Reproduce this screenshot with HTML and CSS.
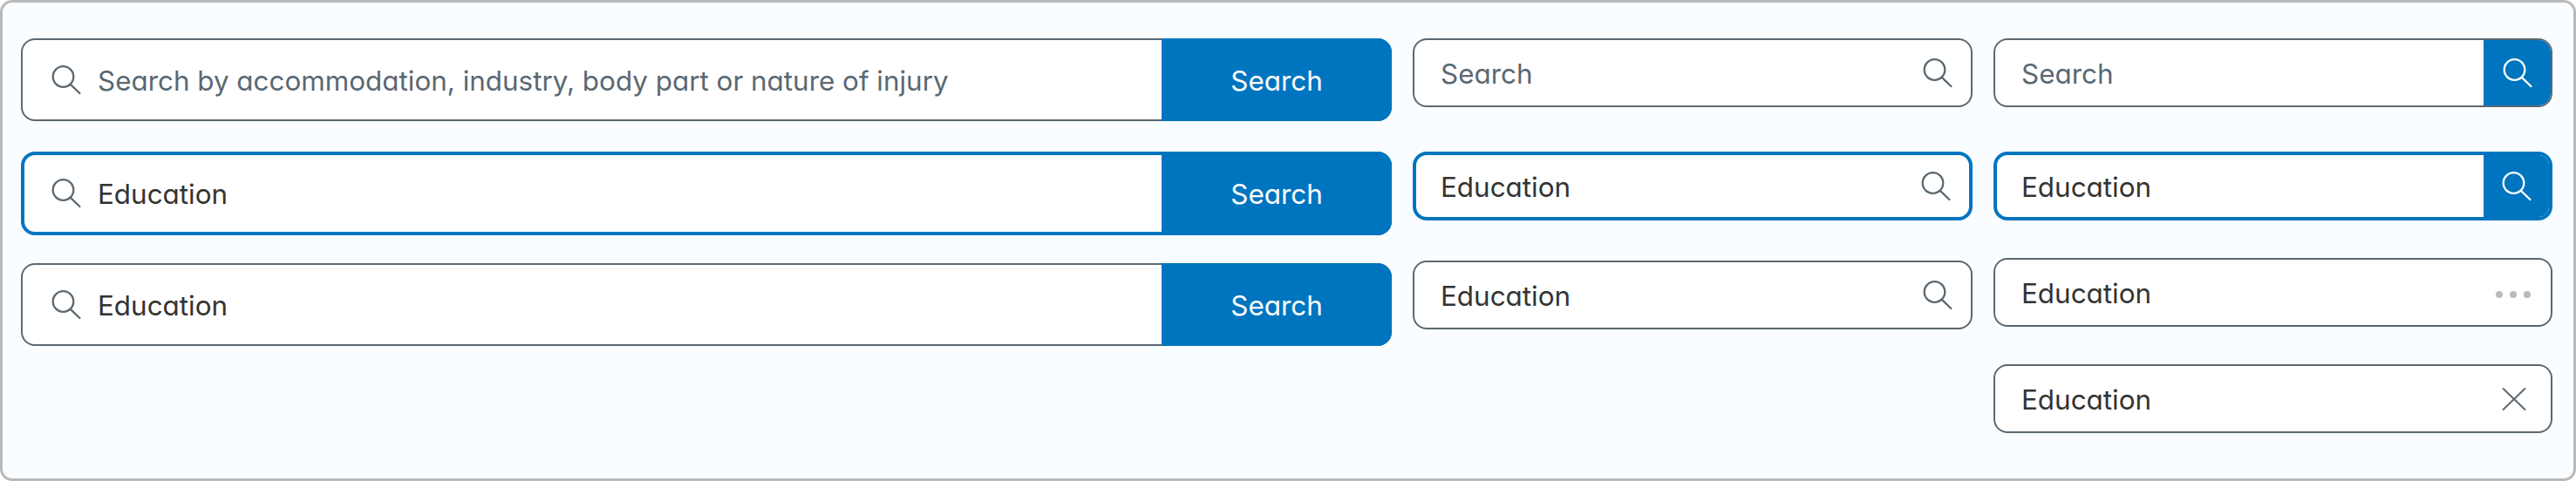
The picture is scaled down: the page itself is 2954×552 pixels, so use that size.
FILE: index.html
```html
<!DOCTYPE html>
<html lang="en">
<head>
<meta charset="utf-8">
<title>Search fields</title>
<link rel="stylesheet" href="styles.css">
</head>
<body>
<svg class="defs" width="0" height="0" aria-hidden="true">
  <symbol id="lens" viewBox="0 0 34 34">
    <circle cx="13.5" cy="13" r="11.8" fill="none" stroke="currentColor" stroke-width="2.3"/>
    <path d="M21.6 21.7 32.4 32" fill="none" stroke="currentColor" stroke-width="2.3" stroke-linecap="round"/>
  </symbol>
</svg>
<main class="panel">
  <section class="col col-wide">
    <div class="field field-lg">
      <svg class="lens lens-lead"><use href="#lens"/></svg>
      <span class="text placeholder">Search by accommodation, industry, body part or nature of injury</span>
      <button class="btn-text">Search</button>
    </div>
    <div class="field field-lg field-focus">
      <svg class="lens lens-lead"><use href="#lens"/></svg>
      <span class="text">Education</span>
      <button class="btn-text">Search</button>
    </div>
    <div class="field field-lg">
      <svg class="lens lens-lead"><use href="#lens"/></svg>
      <span class="text">Education</span>
      <button class="btn-text">Search</button>
    </div>
  </section>
  <section class="col col-mid">
    <div class="field field-sm">
      <span class="text placeholder">Search</span>
      <svg class="lens lens-trail"><use href="#lens"/></svg>
    </div>
    <div class="field field-sm field-focus">
      <span class="text">Education</span>
      <svg class="lens lens-trail"><use href="#lens"/></svg>
    </div>
    <div class="field field-sm">
      <span class="text">Education</span>
      <svg class="lens lens-trail"><use href="#lens"/></svg>
    </div>
  </section>
  <section class="col col-right">
    <div class="field field-sm">
      <span class="text placeholder">Search</span>
      <button class="btn-icon"><svg class="lens"><use href="#lens"/></svg></button>
    </div>
    <div class="field field-sm field-focus">
      <span class="text">Education</span>
      <button class="btn-icon"><svg class="lens"><use href="#lens"/></svg></button>
    </div>
    <div class="field field-sm">
      <span class="text">Education</span>
      <span class="dots"><i></i><i></i><i></i></span>
    </div>
    <div class="field field-sm">
      <span class="text">Education</span>
      <svg class="close" viewBox="0 0 28 26"><path d="M1 0.5 27 25.5M27 0.5 1 25.5" fill="none" stroke="currentColor" stroke-width="2"/></svg>
    </div>
  </section>
</main>
</body>
</html>
```
FILE: styles.css
```css
* { box-sizing: border-box; }
html, body { margin: 0; padding: 0; }
.defs { position: absolute; }
.panel {
  width: 2954px;
  height: 552px;
  padding: 41px 24px 0 21px;
  display: grid;
  grid-template-columns: 1572px 642px 641px;
  column-gap: 24px;
  align-items: start;
  background: #f9fdff;
  border: 3px solid #b9b9b9;
  border-radius: 14px;
  font-family: Inter, "Liberation Sans", sans-serif;
  font-feature-settings: "cv11" 1;
  font-weight: 400;
}
.col { display: flex; flex-direction: column; }
.col-wide { gap: 32px; }
.col-wide .field:nth-child(2) { margin-top: 3px; }
.col-mid { gap: 46px; }
.col-mid .field:nth-child(2) { margin-top: 5px; }
.col-right { gap: 43px; }
.col-right .field:nth-child(2) { margin-top: 8px; }
.field {
  display: flex;
  align-items: center;
  background: #fff;
  border: 2px solid #5a6872;
  border-radius: 16px;
  position: relative;
}
.field-lg { height: 95px; padding-left: 33px; }
.field-sm { height: 79px; padding-left: 30px; overflow: hidden; }
.field-focus { border: 4px solid #0075bf; }
.field-lg.field-focus { height: 96px; padding-left: 31px; }
.field-sm.field-focus { padding-left: 28px; }
.text {
  flex: 1;
  min-width: 0;
  padding-top: 2px;
  font-size: 31.4px;
  line-height: 40px;
  color: #333;
  white-space: nowrap;
}
.placeholder { color: #5a6872; }
.lens { width: 34px; height: 34px; color: #5a6872; display: block; flex: none; }
.lens-lead { margin-right: 19px; }
.lens-trail { margin-right: 21px; }
.btn-text {
  align-self: stretch;
  width: 264px;
  margin: -2px -2px -2px 0;
  border: 0;
  padding: 2px 0 0;
  border-radius: 0 16px 16px 0;
  background: #0075bf;
  color: #fff;
  font: inherit;
  font-feature-settings: inherit;
  font-size: 31.4px;
}
.field-focus .btn-text { margin: -4px -4px -4px 0; }
.btn-icon {
  align-self: stretch;
  width: 77px;
  border: 0;
  padding: 0;
  background: #0075bf;
  display: flex;
  align-items: center;
  justify-content: center;
}
.field-focus .btn-icon { width: 75px; }
.btn-icon .lens { color: #fff; }
.dots { display: flex; gap: 8px; margin-right: 23px; margin-top: 4px; }
.dots i { width: 8px; height: 8px; border-radius: 50%; background: #bbb; }
.close { width: 28px; height: 26px; color: #5a6872; margin-right: 28px; flex: none; }
```
